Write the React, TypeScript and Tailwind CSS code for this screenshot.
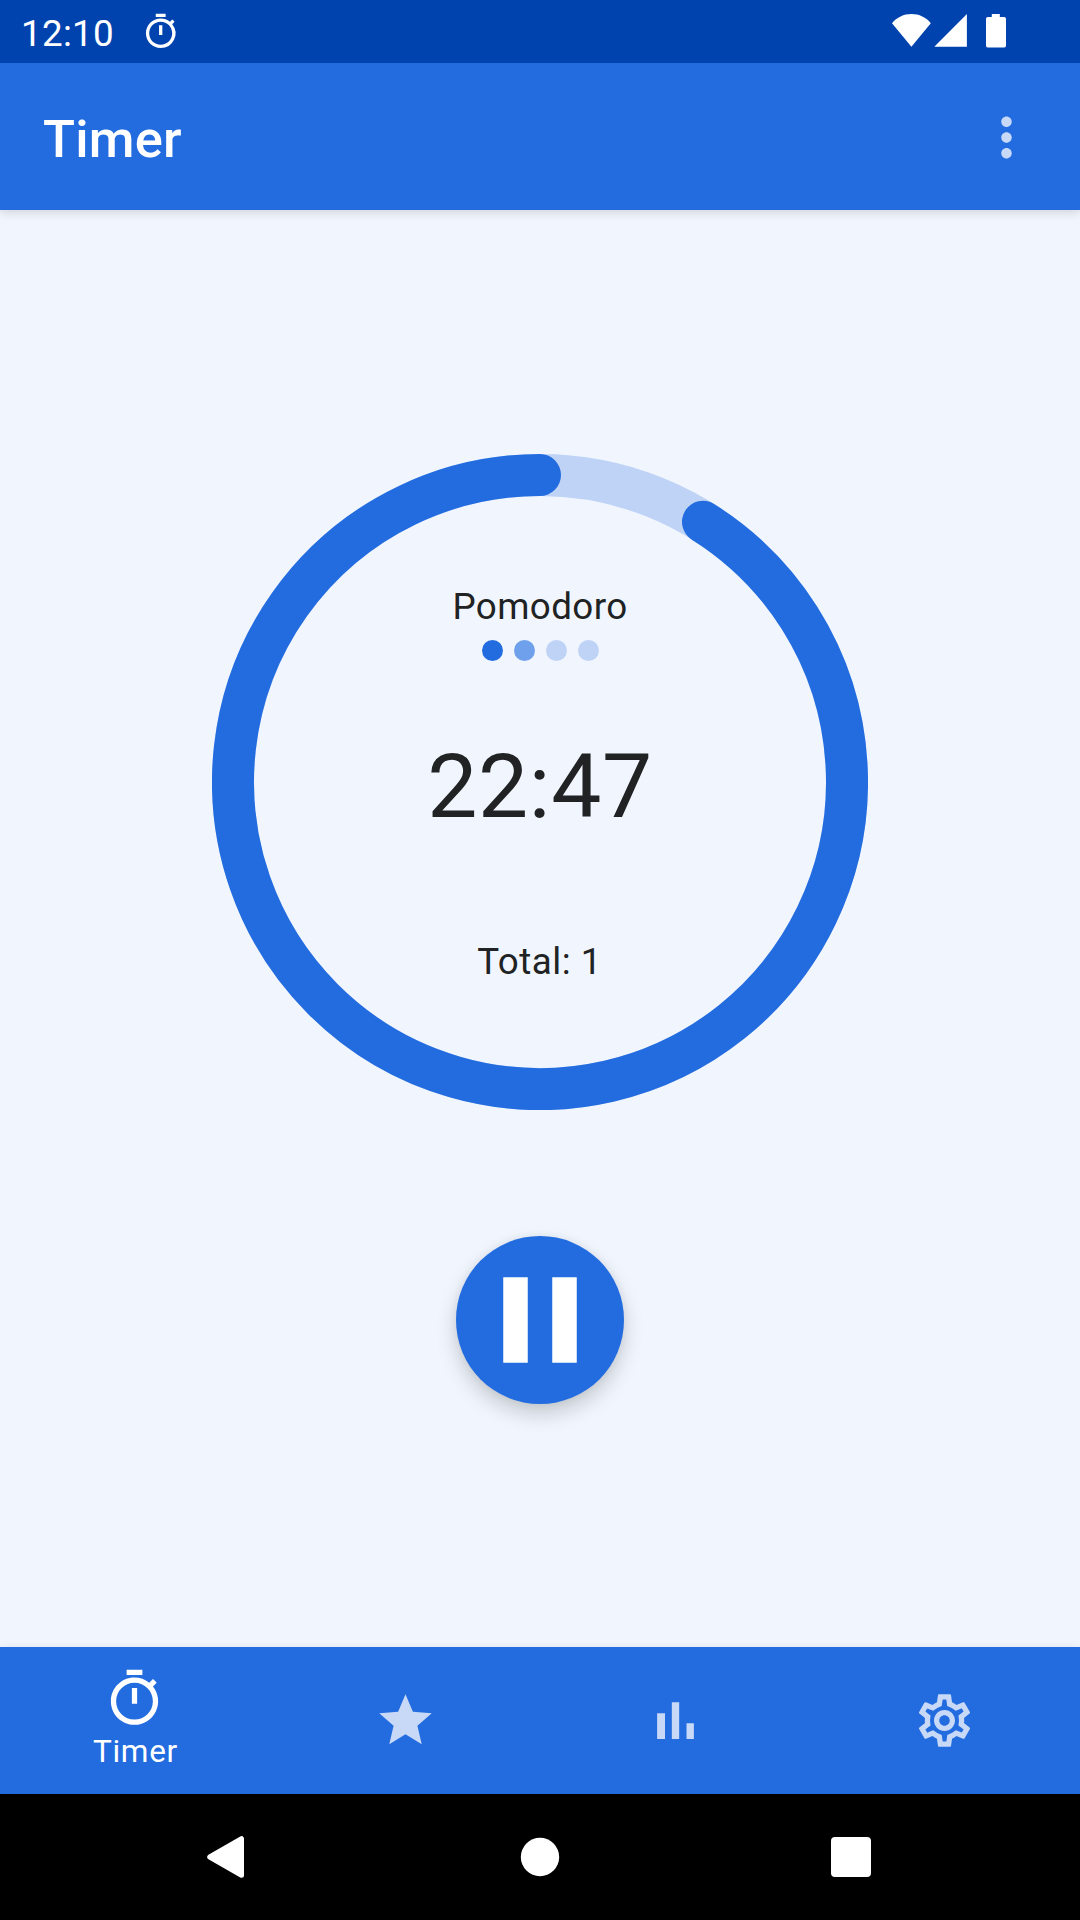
import React from "react";
import {
  MdOutlineTimer,
  MdStar,
  MdOutlineSettings,
  MdMoreVert,
} from "react-icons/md";

const RADIUS = 307;
const TOTAL_SECONDS = 25 * 60;
const REMAINING_SECONDS = 22 * 60 + 46.4;

function StatusBar() {
  return (
    <div className="relative z-20 flex h-[63px] shrink-0 items-start bg-[#0043AE] text-white">
      <span className="ml-[21px] mt-[12px] w-[94px] text-[36.75px] leading-[43px] tracking-[0.3px]">12:10</span>
      <MdOutlineTimer className="ml-[26px] mt-[12px] size-[39.4px]" />
      <svg className="ml-auto mt-[14px] h-[34px] w-[114px]" viewBox="0 0 114 34" fill="currentColor">
        <path d="M0 9.2C5 3.3 11.500 0 19.400 0S34 3.300 38.800 9.200L19.400 32.700z" />
        <path d="M42.300 32.800L74.900 0v32.800z" />
        <path d="M99.800 0h8v3h4.400a1.800 1.800 0 0 1 1.800 1.800v27a1.800 1.800 0 0 1-1.800 1.800H95.800a1.800 1.800 0 0 1-1.800-1.800v-27A1.800 1.800 0 0 1 95.800 3h4z" />
      </svg>
      <div className="w-[74px]" />
    </div>
  );
}

function AppBar() {
  return (
    <header className="z-10 flex h-[147px] shrink-0 items-center justify-between bg-[#236CE0] pl-[43px] pr-[42px] text-white shadow-[0_2px_10px_rgba(0,0,0,0.15)]">
      <h1 className="pt-[4px] text-[52.5px] font-medium leading-[62px] tracking-[0.2px]">Timer</h1>
      <MdMoreVert className="mt-[1px] size-[63px] text-[#C8D9F7]" />
    </header>
  );
}

function ProgressRing() {
  const angle = (1 - REMAINING_SECONDS / TOTAL_SECONDS) * 2 * Math.PI;
  const x = 328 + RADIUS * Math.sin(angle);
  const y = 328 - RADIUS * Math.cos(angle);
  return (
    <svg className="size-[656px] [grid-area:1/1]" viewBox="0 0 656 656" fill="none" strokeWidth="42">
      <circle cx="328" cy="328" r={RADIUS} stroke="#BFD3F6" />
      <path
        d={`M${x} ${y}A${RADIUS} ${RADIUS} 0 1 1 328 21`}
        stroke="#236CE0"
        strokeLinecap="round"
      />
    </svg>
  );
}

function TimerDial() {
  return (
    <div className="mt-[244px] grid size-[656px]">
      <ProgressRing />
      <div className="flex flex-col items-center pt-[131px] text-[#202223] [grid-area:1/1]">
        <div className="text-[36.75px] leading-[43px] tracking-[0.4px]">Pomodoro</div>
        <div className="mt-[12px] flex gap-[11px]">
          <i className="size-[21px] rounded-full bg-[#236CE0]" />
          <i className="size-[21px] rounded-full bg-[#6FA0EB]" />
          <i className="size-[21px] rounded-full bg-[#BFD3F6]" />
          <i className="size-[21px] rounded-full bg-[#BFD3F6]" />
        </div>
        <div className="mt-[73px] text-[89.25px] leading-[105px] tracking-[0.66px]">22:47</div>
        <div className="mt-[101px] pr-[1px] text-[36.75px] leading-[43px] tracking-[0.5px]">Total: 1</div>
      </div>
    </div>
  );
}

function PauseButton() {
  return (
    <button className="mt-[126px] size-[168px] rounded-full bg-[#236CE0] text-white shadow-[0_10px_20px_rgba(0,0,0,0.18),0_0_8px_rgba(0,0,0,0.06)]">
      <svg className="size-[168px]" viewBox="0 0 168 168" fill="currentColor">
        <path d="M47.250 41.200h24.500v85.600h-24.500zM96.250 41.200h24.500v85.600h-24.500z" />
      </svg>
    </button>
  );
}

function BottomNav() {
  return (
    <nav className="z-10 grid h-[147px] shrink-0 grid-cols-4 bg-[#236CE0] text-[#C8D9F7] shadow-[0_0_8px_rgba(0,0,0,0.08)]">
      <div className="flex flex-col items-center pt-[20px] text-white">
        <MdOutlineTimer className="mr-px size-[63px]" />
        <span className="ml-[1px] mt-[3px] text-[31.5px] leading-[37px] tracking-[0.7px]">Timer</span>
      </div>
      <div className="flex items-center justify-center">
        <MdStar className="size-[63px]" />
      </div>
      <div className="flex items-center justify-center">
        <svg className="size-[63px]" viewBox="0 0 24 24" fill="currentColor">
          <path d="M5 9.200h3V19H5zM10.600 5h2.800v14h-2.800zm5.600 8H19v6h-2.800z" />
        </svg>
      </div>
      <div className="flex items-center justify-center">
        <MdOutlineSettings className="mr-[2px] size-[63px]" />
      </div>
    </nav>
  );
}

function SystemNav() {
  return (
    <div className="flex h-[126px] shrink-0 items-center bg-black pl-[207px]">
      <svg className="h-[42px] w-[37px]" viewBox="0 0 37 42" fill="white" stroke="white" strokeWidth="5" strokeLinejoin="round">
        <path d="M34.500 2.700v36.600L2.700 21z" />
      </svg>
      <svg className="ml-[276px] size-[40px]" viewBox="0 0 40 40" fill="white">
        <circle cx="20" cy="20" r="19.200" />
      </svg>
      <div className="ml-[271px] size-[40px] rounded-[4px] bg-white" />
    </div>
  );
}

export default function App() {
  return (
    <div className="flex h-[1920px] w-[1080px] flex-col overflow-hidden bg-[#F1F6FE] font-['Roboto',sans-serif]">
      <StatusBar />
      <AppBar />
      <main className="flex flex-1 flex-col items-center">
        <TimerDial />
        <PauseButton />
      </main>
      <BottomNav />
      <SystemNav />
    </div>
  );
}
